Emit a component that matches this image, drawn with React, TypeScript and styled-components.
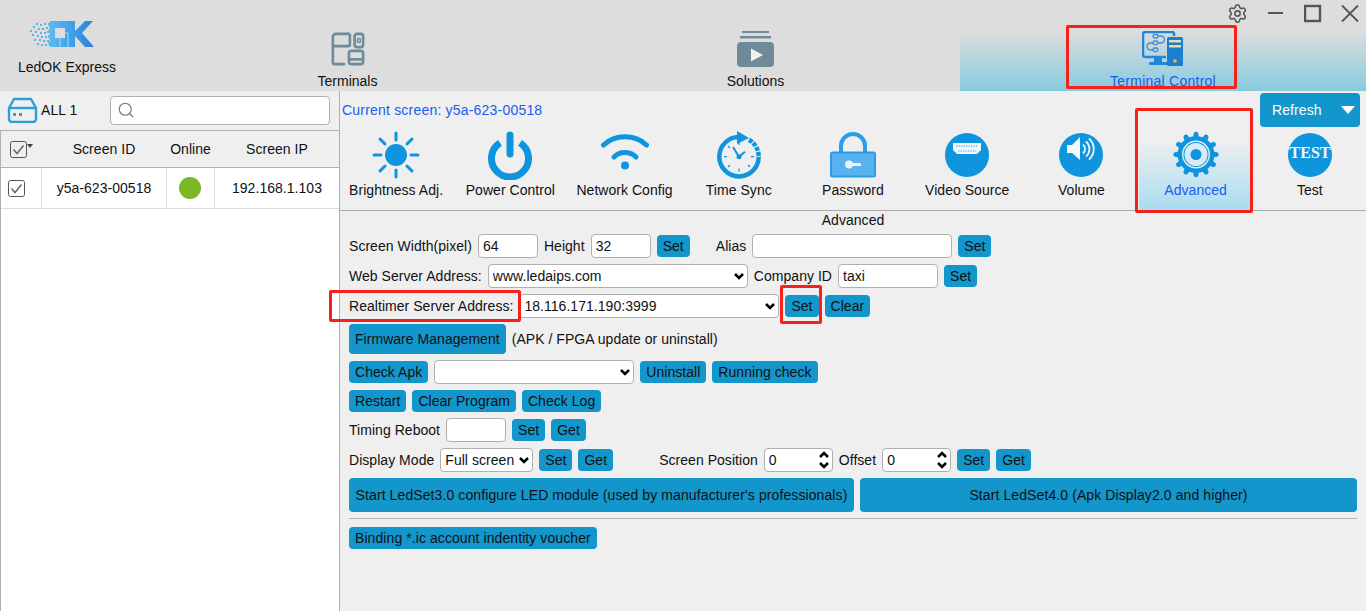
import styled, { createGlobalStyle } from 'styled-components';
import { Search, Settings } from 'lucide-react';

const BLUE = '#0f94de';
const BTN = '#1296cb';
const LINK = '#1a5cf0';

const chevron = (up: boolean) =>
  up
    ? `<path d='M2 6l4-4 4 4' fill='none' stroke='black' stroke-width='2.5'/>`
    : `<path d='M2 2l4 4 4-4' fill='none' stroke='black' stroke-width='2.5'/>`;

const selectArrow = `url("data:image/svg+xml;utf8,<svg xmlns='http://www.w3.org/2000/svg' width='12' height='8'>${chevron(false)}</svg>")`;
const spinArrow = `url("data:image/svg+xml;utf8,<svg xmlns='http://www.w3.org/2000/svg' width='12' height='18'>${chevron(true)}<g transform='translate(0 10)'>${chevron(false)}</g></svg>")`;

const GlobalStyle = createGlobalStyle`
  html, body {
    margin: 0;
    padding: 0;
    background: #efefef;
  }
  * {
    box-sizing: border-box;
  }
  body {
    font-family: "Liberation Sans", Arial, sans-serif;
    font-size: 14px;
    letter-spacing: 0.04px;
    color: #111;
  }
`;

const Page = styled.div`
  position: relative;
  width: 1366px;
  height: 611px;
  overflow: hidden;
  display: flex;
  flex-direction: column;
`;

const Header = styled.header`
  height: 91px;
  flex: none;
  background: #dddddd;
  display: grid;
  grid-template-columns: 144px 407px 409px 406px;
`;

const Brand = styled.div`
  display: flex;
  flex-direction: column;
  align-items: center;
  padding: 21px 10px 0 0;
  gap: 12px;
  line-height: 16px;
  letter-spacing: 0;
`;

const LogoMark = styled.svg`
  margin-right: 10px;
`;

const MainTab = styled.div<{ $active?: boolean }>`
  display: flex;
  flex-direction: column;
  align-items: center;
  padding-top: 30px;
  color: ${(p) => (p.$active ? LINK : '#111')};
  letter-spacing: ${(p) => (p.$active ? '0.25px' : '0')};
  background: ${(p) =>
    p.$active ? 'linear-gradient(#dddddd 30px, #88cbdd 100%)' : 'transparent'};
`;

const MainIcon = styled.div`
  height: 38px;
  display: flex;
  align-items: center;
  justify-content: center;
`;

const MainLabel = styled.div`
  margin-top: 5px;
  line-height: 16px;
`;

const WindowControls = styled.div`
  position: absolute;
  top: 2px;
  right: 7px;
  display: flex;
  align-items: center;
  gap: 19px;
  color: #555;
`;

const Body = styled.div`
  flex: 1;
  display: grid;
  grid-template-columns: 340px 1fr;
  min-height: 0;
`;

const LeftPanel = styled.aside`
  display: flex;
  flex-direction: column;
  border-right: 1px solid #b0b0b0;
`;

const Toolbar = styled.div`
  height: 39px;
  flex: none;
  display: flex;
  align-items: center;
  padding-bottom: 1px;
  background: #efefef;
`;

const LeftToolbar = styled(Toolbar)`
  padding-left: 7px;
`;

const AllLabel = styled.span`
  margin-left: 3px;
  width: 69px;
`;

const SearchBox = styled.div`
  width: 220px;
  height: 29px;
  background: #fff;
  border: 1px solid #b0b0b0;
  border-radius: 4px;
  display: flex;
  align-items: center;
  padding-left: 6px;
  color: #777;
`;

const Table = styled.div`
  flex: 1;
  background: #fff;
  border-top: 1px solid #b0b0b0;
  border-left: 1px solid #b0b0b0;
`;

const TableRow = styled.div<{ $head?: boolean }>`
  display: grid;
  grid-template-columns: 41px 125px 48px 124px;
  height: ${(p) => (p.$head ? '37px' : '41px')};
  background: ${(p) => (p.$head ? '#efefef' : '#fff')};
  border-bottom: 1px solid ${(p) => (p.$head ? '#b0b0b0' : '#dcdcdc')};
`;

const Cell = styled.div<{ $head?: boolean }>`
  display: flex;
  align-items: center;
  justify-content: center;
  border-right: 1px solid ${(p) => (p.$head ? 'transparent' : '#dcdcdc')};
  &:last-child {
    border-right: none;
  }
`;

const CheckCell = styled(Cell)`
  justify-content: flex-start;
  padding-left: 7px;
`;

const HeadCheckCell = styled(Cell)`
  justify-content: flex-start;
  padding-left: 9px;
`;

const OnlineDot = styled.span`
  width: 22px;
  height: 22px;
  margin-left: -2px;
  border-radius: 50%;
  background: #7ab827;
`;

const RightPanel = styled.main`
  display: flex;
  flex-direction: column;
  min-width: 0;
`;

const RightToolbar = styled(Toolbar)`
  justify-content: space-between;
  padding: 0 6px 1px 2px;
  color: ${LINK};
  letter-spacing: 0.2px;
`;

const RefreshButton = styled.div`
  width: 100px;
  height: 34px;
  border-radius: 4px;
  background: ${BTN};
  color: #fff;
  display: flex;
  align-items: center;
  justify-content: space-between;
  padding: 0 5px 0 12px;
  letter-spacing: 0.08px;
`;

const ToolTabs = styled.nav`
  height: 81px;
  flex: none;
  display: grid;
  grid-template-columns: repeat(9, 1fr);
  margin: 0 -1px 0 -1px;
  border-bottom: 1px solid #aaaaaa;
`;

const ToolTab = styled.div<{ $active?: boolean }>`
  display: flex;
  flex-direction: column;
  align-items: center;
  color: ${(p) => (p.$active ? LINK : '#111')};
  background: ${(p) =>
    p.$active ? 'linear-gradient(#efefef 12%, #a9dcef 100%)' : 'transparent'};
`;

const ToolIcon = styled.div`
  height: 50px;
  display: flex;
  align-items: center;
  justify-content: center;
`;

const ToolLabel = styled.div`
  line-height: 16px;
  margin-top: 2px;
  white-space: nowrap;
`;

const Form = styled.section`
  display: flex;
  flex-direction: column;
  gap: 6px;
  padding: 1px 9px 0;
`;

const FormTitle = styled.div`
  line-height: 16px;
  text-align: center;
`;

const Row = styled.div`
  display: flex;
  align-items: center;
  gap: 6px;
  white-space: nowrap;
`;

const Btn = styled.button<{ $tall?: boolean; $grow?: number }>`
  font: inherit;
  letter-spacing: inherit;
  color: #111;
  background: ${BTN};
  border: none;
  border-radius: 4px;
  height: ${(p) => (p.$tall ? '30px' : '22px')};
  padding: 0 6px;
  flex: ${(p) => (p.$grow ? `0 0 ${p.$grow}px` : 'none')};
`;

const WideBtn = styled(Btn)`
  height: 34px;
  letter-spacing: 0.1px;
`;

const LongBtn = styled(Btn)`
  letter-spacing: 0.08px;
`;

const Field = styled.input<{ $w: number }>`
  font: inherit;
  letter-spacing: inherit;
  color: #111;
  width: ${(p) => p.$w}px;
  height: 24px;
  background: #fff;
  border: 1px solid #b0b0b0;
  border-radius: 4px;
  padding: 0 4px;
  outline: none;
`;

const SpinField = styled(Field)`
  background: #fff ${spinArrow} no-repeat right 2px center;
`;

const Picker = styled.select<{ $w: number }>`
  font: inherit;
  letter-spacing: inherit;
  color: #111;
  width: ${(p) => p.$w}px;
  height: 24px;
  appearance: none;
  background: #fff ${selectArrow} no-repeat right 2px center;
  border: 1px solid #b0b0b0;
  border-radius: 4px;
  padding: 0 4px;
  outline: none;
`;

const Spacer = styled.span<{ $w: number }>`
  width: ${(p) => p.$w}px;
`;

const Rule = styled.hr`
  width: 100%;
  margin: 0 0 2px;
  border: none;
  border-top: 1px solid #b4b4b4;
`;

const Marker = styled.div<{ $x: number; $y: number; $w: number; $h: number }>`
  position: absolute;
  left: ${(p) => p.$x}px;
  top: ${(p) => p.$y}px;
  width: ${(p) => p.$w}px;
  height: ${(p) => p.$h}px;
  border: 3px solid #f5221b;
  border-radius: 2px;
  pointer-events: none;
`;

const particles = [
  [0, 9], [2, 13], [3, 5], [4, 18], [5, 10], [6, 2], [7, 14], [7, 22], [8, 7], [9, 18],
  [10, 11], [10, 3], [11, 15], [11, 23], [12, 7], [13, 19], [14, 11], [14, 2], [15, 15],
  [15, 23], [16, 6], [17, 19], [17, 10], [18, 2], [18, 14], [19, 23],
];

const Logo = () => (
  <LogoMark width="64" height="26" viewBox="0 0 64 26">
    <defs>
      <linearGradient id="lg" x1="0" x2="1" y1="0" y2="0">
        <stop offset="0" stopColor="#62bcf0" />
        <stop offset="0.6" stopColor="#3a9be8" />
        <stop offset="1" stopColor="#2b7ede" />
      </linearGradient>
    </defs>
    <path
      fill="url(#lg)"
      fillRule="evenodd"
      d="M20 0H45V10L55 0h8L52 12l12 14h-9L45 15v11H20l-2-4 2-3-2-3 2-3-2-3 2-3-2-3 2-3zM25 7v10h10V7z"
    />
    <path d="M30 17v9M35 12h3v14" fill="none" stroke="#a9d6f5" strokeWidth="1" />
    {particles.map(([x, y]) => (
      <rect key={`${x}-${y}`} x={x} y={y} width="2" height="2" fill="#58b4ec" />
    ))}
  </LogoMark>
);

const TerminalsIcon = () => (
  <svg width="34" height="34" viewBox="0 0 36 36" fill="none" stroke="#6f8a99" strokeWidth="2.8">
    <path d="M20 2H5a3 3 0 0 0-3 3v27a2 2 0 0 0 2 2h11M2 15h16a2 2 0 0 0 2-2V2" strokeLinejoin="round" />
    <rect x="25" y="2" width="9" height="14" rx="2.5" />
    <rect x="28" y="7" width="3" height="4" rx="1" strokeWidth="1.6" />
    <rect x="19" y="20" width="15" height="14" rx="2.5" />
    <path d="M19 29h15" />
  </svg>
);

const SolutionsIcon = () => (
  <svg width="37" height="36" viewBox="0 0 37 36">
    <rect x="5" y="0" width="27" height="2" fill="#6f8a99" />
    <rect x="3" y="5" width="31" height="2.400" fill="#6f8a99" />
    <rect x="0" y="11" width="37" height="25" rx="4" fill="#6f8a99" />
    <path d="M14 17.500l12 6.500-12 6.500z" fill="#f1f1f1" />
  </svg>
);

const TerminalControlIcon = () => (
  <svg width="42" height="36" viewBox="0 0 42 36">
    <path d="M24 26H3a2 2 0 0 1-2-2V3a2 2 0 0 1 2-2h27a2 2 0 0 1 2 2v2" fill="none" stroke="#1f86d8" strokeWidth="2.500" />
    <rect x="12" y="27" width="8" height="5" fill="#1f86d8" />
    <rect x="7" y="31" width="19" height="3" rx="1" fill="#1f86d8" />
    <rect x="25" y="6" width="16" height="29" rx="1.500" fill="#1a7fd0" />
    <rect x="27" y="9" width="12" height="2.500" fill="#f0d9a0" />
    <rect x="27" y="14" width="12" height="2.500" fill="#f0d9a0" />
    <circle cx="33" cy="30" r="1.800" fill="#f3b54a" />
    <g fill="none" stroke="#3d8fd0" strokeWidth="1.400">
      <rect x="11" y="3.500" width="5" height="3.500" rx="1.700" />
      <rect x="11" y="10" width="5" height="3.500" rx="1.700" />
      <rect x="11" y="17" width="5" height="3.500" rx="1.700" />
      <path d="M16 5h3a3.500 3.500 0 0 1 0 7h-3M11 12H8.500a3.500 3.500 0 0 0 0 7H11" />
    </g>
  </svg>
);

const SunIcon = () => (
  <svg width="48" height="50" viewBox="0 -1 48 50" stroke={BLUE} strokeWidth="3" strokeLinecap="round">
    <circle cx="24" cy="24" r="11" fill={BLUE} stroke="none" />
    <path d="M24 2v7M24 39v7M2 24h7M39 24h7M8 8l5 5M35 35l5 5M40 8l-5 5M13 35l-5 5" />
  </svg>
);

const PowerIcon = () => (
  <svg width="44" height="50" viewBox="0 -1 44 50" fill="none" stroke={BLUE}>
    <path d="M32 11.900A18.500 18.500 0 1 1 12 11.900" strokeWidth="7" />
    <path d="M22 4v19" strokeWidth="7" strokeLinecap="round" />
  </svg>
);

const WifiIcon = () => (
  <svg width="48" height="50" viewBox="0 -2 48 50" fill="none" stroke={BLUE} strokeWidth="5" strokeLinecap="round">
    <path d="M2.500 13C14 2 34 2 45.500 13" />
    <path d="M13 25c6-6 16-6 22 0" />
    <circle cx="24" cy="33.500" r="4" fill={BLUE} stroke="none" />
  </svg>
);

const ClockIcon = () => (
  <svg width="46" height="50" viewBox="0 0 46 50" fill="none">
    <path d="M23 7A19.700 19.700 0 1 0 42.700 26.700" stroke={BLUE} strokeWidth="4.500" />
    <path d="M33 9.700A19.700 19.700 0 0 1 42.700 26.700" stroke={BLUE} strokeWidth="4.500" strokeDasharray="4 1.200" />
    <path d="M21 1l12 7-12 6z" fill={BLUE} />
    <path d="M23 12v3M23 38.500v3M8 26.700h3M35 26.700h3M12 16l2 2M34 37l-2-2M12 37l2-2" stroke={BLUE} strokeWidth="1.300" />
    <path d="M17 17l6 9.700 6-5" stroke={BLUE} strokeWidth="2" />
    <circle cx="23" cy="26.700" r="2.500" fill={BLUE} />
  </svg>
);

const LockIcon = () => (
  <svg width="46" height="50" viewBox="0 0 46 50">
    <path d="M11 23V16a12 12 0 0 1 24 0v7" fill="none" stroke="#2b9ce8" strokeWidth="4" />
    <rect x="1" y="22.500" width="44" height="24" rx="1.500" fill="#58b2f0" stroke="#2b9ce8" strokeWidth="2" />
    <circle cx="19" cy="34.500" r="4" fill="#e8f3fb" />
    <rect x="19" y="33" width="12" height="3" fill="#e8f3fb" />
  </svg>
);

const VideoIcon = () => (
  <svg width="44" height="50" viewBox="0 0 44 50">
    <circle cx="22" cy="25" r="22" fill={BLUE} />
    <path d="M8 13h28v7l-4 4H12l-4-4z" fill="#f2f8fc" />
    <path d="M11 16h22M13 21h18" stroke="#7fbfe6" strokeWidth="1.500" strokeDasharray="1.500 1" />
  </svg>
);

const VolumeIcon = () => (
  <svg width="44" height="50" viewBox="0 0 44 50">
    <circle cx="22" cy="25" r="22" fill={BLUE} />
    <path d="M8 15h5l8-8v23l-8-7H8z" fill="#f2f8fc" />
    <g fill="none" stroke="#f2f8fc" strokeWidth="1.800">
      <path d="M24 14.500a6 6 0 0 1 0 9" />
      <path d="M27 11.500a10 10 0 0 1 0 15" />
      <path d="M30 8.500a14 14 0 0 1 0 21" />
    </g>
  </svg>
);

// 12 rounded teeth round the wheel, worked out once
const gearPath = (() => {
  const teeth = 12;
  const step = (Math.PI * 2) / teeth;
  const at = (r: number, t: number) =>
    `${(23 + r * Math.cos(t)).toFixed(2)} ${(24.500 + r * Math.sin(t)).toFixed(2)}`;
  let d = '';
  for (let i = 0; i < teeth; i += 1) {
    const a = i * step - Math.PI / 2;
    d += `${i === 0 ? 'M' : 'L'}${at(18.500, a - step * 0.28)}`;
    d += `L${at(21.500, a - step * 0.2)}`;
    d += `Q${at(24, a)} ${at(21.500, a + step * 0.2)}`;
    d += `L${at(18.500, a + step * 0.28)}`;
  }
  return `${d}Z`;
})();

const GearIcon = () => (
  <svg width="46" height="50" viewBox="0 0 46 50">
    <path d={gearPath} fill={BLUE} />
    <circle cx="23" cy="24.500" r="14" fill="#d6ecf5" />
    <circle cx="23" cy="24.500" r="12.500" fill={BLUE} />
    <circle cx="23" cy="24.500" r="11.500" fill="#d6ecf5" />
    <circle cx="23" cy="24.500" r="5.500" fill={BLUE} />
  </svg>
);

const TestIcon = () => (
  <svg width="44" height="50" viewBox="0 0 44 50">
    <circle cx="22" cy="25" r="22" fill={BLUE} />
    <text
      x="22"
      y="28"
      textAnchor="middle"
      fontFamily='"Liberation Serif", serif'
      fontWeight="700"
      fontSize="16"
      letterSpacing="0"
      fill="#f2f8fc"
    >
      TEST
    </text>
  </svg>
);

const DeviceIcon = () => (
  <svg width="31" height="26" viewBox="0 0 31 26" fill="none" stroke="#2ba0d8" strokeWidth="2.400">
    <path d="M7 2h17l5 9v11a3 3 0 0 1-3 3H5a3 3 0 0 1-3-3V11z" strokeLinejoin="round" />
    <path d="M2 11h27" />
    <rect x="6" y="16" width="3" height="3" fill="#2ba0d8" stroke="none" />
    <rect x="12" y="16" width="3" height="3" fill="#2ba0d8" stroke="none" />
  </svg>
);

const CheckIcon = () => (
  <svg width="17" height="17" viewBox="0 0 17 17" fill="none">
    <rect x="0.500" y="0.500" width="16" height="16" rx="2" stroke="#555" />
    <path d="M3.500 8.500l3.500 4 6.500-8" stroke="#666" strokeWidth="1.500" />
  </svg>
);

const HeadCheckIcon = () => (
  <svg width="23" height="17" viewBox="0 0 23 17" fill="none">
    <rect x="0.500" y="0.500" width="16" height="16" rx="2" stroke="#555" />
    <path d="M3.500 8.500l3.500 4 6.500-8" stroke="#666" strokeWidth="1.500" />
    <path d="M17 3h6l-3 4z" fill="#444" />
  </svg>
);

const tools = [
  { label: 'Brightness Adj.', icon: <SunIcon /> },
  { label: 'Power Control', icon: <PowerIcon /> },
  { label: 'Network Config', icon: <WifiIcon /> },
  { label: 'Time Sync', icon: <ClockIcon /> },
  { label: 'Password', icon: <LockIcon /> },
  { label: 'Video Source', icon: <VideoIcon /> },
  { label: 'Volume', icon: <VolumeIcon /> },
  { label: 'Advanced', icon: <GearIcon />, active: true },
  { label: 'Test', icon: <TestIcon /> },
];

const App = () => {
  return (
    <Page>
      <GlobalStyle />
      <Header>
        <Brand>
          <Logo />
          <div>LedOK Express</div>
        </Brand>
        <MainTab>
          <MainIcon>
            <TerminalsIcon />
          </MainIcon>
          <MainLabel>Terminals</MainLabel>
        </MainTab>
        <MainTab>
          <MainIcon>
            <SolutionsIcon />
          </MainIcon>
          <MainLabel>Solutions</MainLabel>
        </MainTab>
        <MainTab $active>
          <MainIcon>
            <TerminalControlIcon />
          </MainIcon>
          <MainLabel>Terminal Control</MainLabel>
        </MainTab>
      </Header>

      <WindowControls>
        <Settings size={21} strokeWidth={1.8} />
        <svg width="18" height="22" viewBox="0 0 18 22">
          <rect x="1" y="10" width="15" height="2" fill="#555" />
        </svg>
        <svg width="18" height="22" viewBox="0 0 18 22" fill="none">
          <rect x="1" y="4" width="15" height="15" stroke="#555" strokeWidth="2.400" />
        </svg>
        <svg width="18" height="22" viewBox="0 0 18 22" fill="none">
          <path d="M1 3.500l16 16M17 3.500L1 19.500" stroke="#555" strokeWidth="1.800" />
        </svg>
      </WindowControls>

      <Body>
        <LeftPanel>
          <LeftToolbar>
            <DeviceIcon />
            <AllLabel>ALL 1</AllLabel>
            <SearchBox>
              <Search size={18} strokeWidth={1.5} />
            </SearchBox>
          </LeftToolbar>
          <Table>
            <TableRow $head>
              <HeadCheckCell $head>
                <HeadCheckIcon />
              </HeadCheckCell>
              <Cell $head>Screen ID</Cell>
              <Cell $head>Online</Cell>
              <Cell $head>Screen IP</Cell>
            </TableRow>
            <TableRow>
              <CheckCell>
                <CheckIcon />
              </CheckCell>
              <Cell>y5a-623-00518</Cell>
              <Cell>
                <OnlineDot />
              </Cell>
              <Cell>192.168.1.103</Cell>
            </TableRow>
          </Table>
        </LeftPanel>

        <RightPanel>
          <RightToolbar>
            <span>Current screen: y5a-623-00518</span>
            <RefreshButton>
              Refresh
              <svg width="14" height="8" viewBox="0 0 14 8">
                <path d="M0 0h14L7 8z" fill="#fff" />
              </svg>
            </RefreshButton>
          </RightToolbar>

          <ToolTabs>
            {tools.map((tool) => (
              <ToolTab key={tool.label} $active={tool.active}>
                <ToolIcon>{tool.icon}</ToolIcon>
                <ToolLabel>{tool.label}</ToolLabel>
              </ToolTab>
            ))}
          </ToolTabs>

          <Form>
            <FormTitle>Advanced</FormTitle>
            <Row>
              <span>Screen Width(pixel)</span>
              <Field $w={60} defaultValue="64" />
              <span>Height</span>
              <Field $w={60} defaultValue="32" />
              <Btn>Set</Btn>
              <Spacer $w={14} />
              <span>Alias</span>
              <Field $w={200} />
              <Btn>Set</Btn>
            </Row>
            <Row>
              <span>Web Server Address:</span>
              <Picker $w={260} defaultValue="www.ledaips.com">
                <option>www.ledaips.com</option>
              </Picker>
              <span>Company ID</span>
              <Field $w={100} defaultValue="taxi" />
              <Btn>Set</Btn>
            </Row>
            <Row>
              <span>Realtimer Server Address:</span>
              <Picker $w={260} defaultValue="18.116.171.190:3999">
                <option>18.116.171.190:3999</option>
              </Picker>
              <Btn>Set</Btn>
              <Btn>Clear</Btn>
            </Row>
            <Row>
              <Btn $tall>Firmware Management</Btn>
              <span>(APK / FPGA update or uninstall)</span>
            </Row>
            <Row>
              <Btn>Check Apk</Btn>
              <Picker $w={200} />
              <Btn>Uninstall</Btn>
              <Btn>Running check</Btn>
            </Row>
            <Row>
              <Btn>Restart</Btn>
              <Btn>Clear Program</Btn>
              <Btn>Check Log</Btn>
            </Row>
            <Row>
              <span>Timing Reboot</span>
              <Field $w={60} />
              <Btn>Set</Btn>
              <Btn>Get</Btn>
            </Row>
            <Row>
              <span>Display Mode</span>
              <Picker $w={93} defaultValue="Full screen">
                <option>Full screen</option>
              </Picker>
              <Btn>Set</Btn>
              <Btn>Get</Btn>
              <Spacer $w={34} />
              <span>Screen Position</span>
              <SpinField $w={69} defaultValue="0" />
              <span>Offset</span>
              <SpinField $w={69} defaultValue="0" />
              <Btn>Set</Btn>
              <Btn>Get</Btn>
            </Row>
            <Row>
              <WideBtn $grow={505}>Start LedSet3.0 configure LED module (used by manufacturer's professionals)</WideBtn>
              <WideBtn $grow={497}>Start LedSet4.0 (Apk Display2.0 and higher)</WideBtn>
            </Row>
            <Rule />
            <Row>
              <LongBtn>Binding *.ic account indentity voucher</LongBtn>
            </Row>
          </Form>
        </RightPanel>
      </Body>

      <Marker $x={1066} $y={25} $w={171} $h={64} />
      <Marker $x={1135} $y={108} $w={118} $h={105} />
      <Marker $x={329} $y={290} $w={192} $h={32} />
      <Marker $x={780} $y={285} $w={42} $h={39} />
    </Page>
  );
};

export default App;
